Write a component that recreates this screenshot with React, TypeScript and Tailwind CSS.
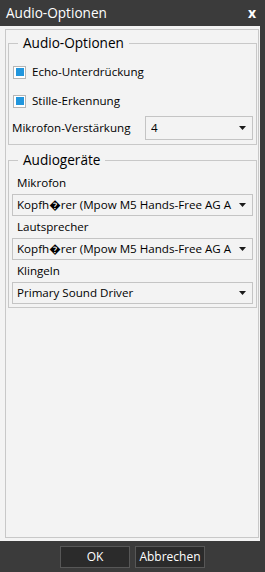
import type { ReactNode } from "react";

const font = { fontFamily: '"Open Sans", "Noto Sans", "DejaVu Sans", sans-serif' };

function Arrow() {
  return (
    <svg width="7" height="4" viewBox="0 0 7 4" className="shrink-0">
      <path d="M0 0H7L3.5 4Z" fill="#1a1a1a" />
    </svg>
  );
}

function Select({ value, className = "" }: { value: string; className?: string }) {
  return (
    <div className={`flex min-w-0 items-center border border-[#c4c4c4] bg-[#f3f3f3] pr-[6px] ${className}`}>
      <span className="min-w-0 flex-1 overflow-hidden whitespace-nowrap text-[11.6px] text-black">{value}</span>
      <Arrow />
    </div>
  );
}

function Check({ label }: { label: string }) {
  return (
    <div className="flex h-[24px] items-center gap-[6px] pl-[1px]">
      <span className="flex h-[13px] w-[13px] items-center justify-center border border-[#b5b5b5] bg-white">
        <span className="h-[8px] w-[8px] bg-[#2196dd]" />
      </span>
      <span className="text-[11.6px] text-black">{label}</span>
    </div>
  );
}

function Group({ title, children, className = "" }: { title: string; children: ReactNode; className?: string }) {
  return (
    <fieldset className={`min-w-0 border border-[#c8c8c8] pl-[3px] pr-[3px] ${className}`}>
      <legend className="ml-[6px] h-[20px] px-[5px] text-[13.6px] leading-[20px] text-black">{title}</legend>
      {children}
    </fieldset>
  );
}

const devices = [
  { label: "Mikrofon", value: "Kopfh\uFFFDrer (Mpow M5 Hands-Free AG A" },
  { label: "Lautsprecher", value: "Kopfh\uFFFDrer (Mpow M5 Hands-Free AG A" },
  { label: "Klingeln", value: "Primary Sound Driver" },
];

export default function App() {
  return (
    <div className="flex h-[572px] w-[265px] flex-col bg-[#3b3b3b]" style={font}>
      {/* Title bar */}
      <div className="flex h-[26px] items-center justify-between pl-[6px] pr-[9px] text-white">
        <span className="text-[13.6px]">Audio-Optionen</span>
        <span className="text-[14px] font-bold leading-none">x</span>
      </div>

      {/* Body */}
      <div className="mr-[5px] flex flex-1 flex-col bg-[#f3f3f3] py-[3px] pl-[5px] pr-[1px]">
        <div className="flex flex-1 flex-col border border-[#c8c8c8] pl-[2px] pr-[1px] pt-[3px]">
          <Group title="Audio-Optionen" className="pb-[4px]">
            <div className="mt-[7px]">
              <Check label="Echo-Unterdrückung" />
            </div>
            <div className="mt-[5px]">
              <Check label="Stille-Erkennung" />
            </div>
            <div className="mt-[3px] flex h-[24px] items-center">
              <span className="flex-1 text-[11.6px] text-black">Mikrofon-Verstärkung</span>
              <Select value="4" className="h-[24px] w-[108px] pl-[5px]" />
            </div>
          </Group>

          <Group title="Audiogeräte" className="mt-[5px] pb-[3px] pt-[2px]">
            {devices.map((d) => (
              <div key={d.label}>
                <div className="flex h-[22px] items-center pl-[5px] text-[11.6px] text-black">{d.label}</div>
                <Select value={d.value} className="h-[22px] pl-[4px]" />
              </div>
            ))}
          </Group>
        </div>
      </div>

      {/* Footer */}
      <div className="flex h-[31px] items-center justify-center gap-[5px]">
        {["OK", "Abbrechen"].map((b) => (
          <button
            key={b}
            className="h-[22px] w-[70px] border border-[#575757] bg-[#2b2b2b] text-[12px] text-white"
          >
            {b}
          </button>
        ))}
      </div>
    </div>
  );
}
